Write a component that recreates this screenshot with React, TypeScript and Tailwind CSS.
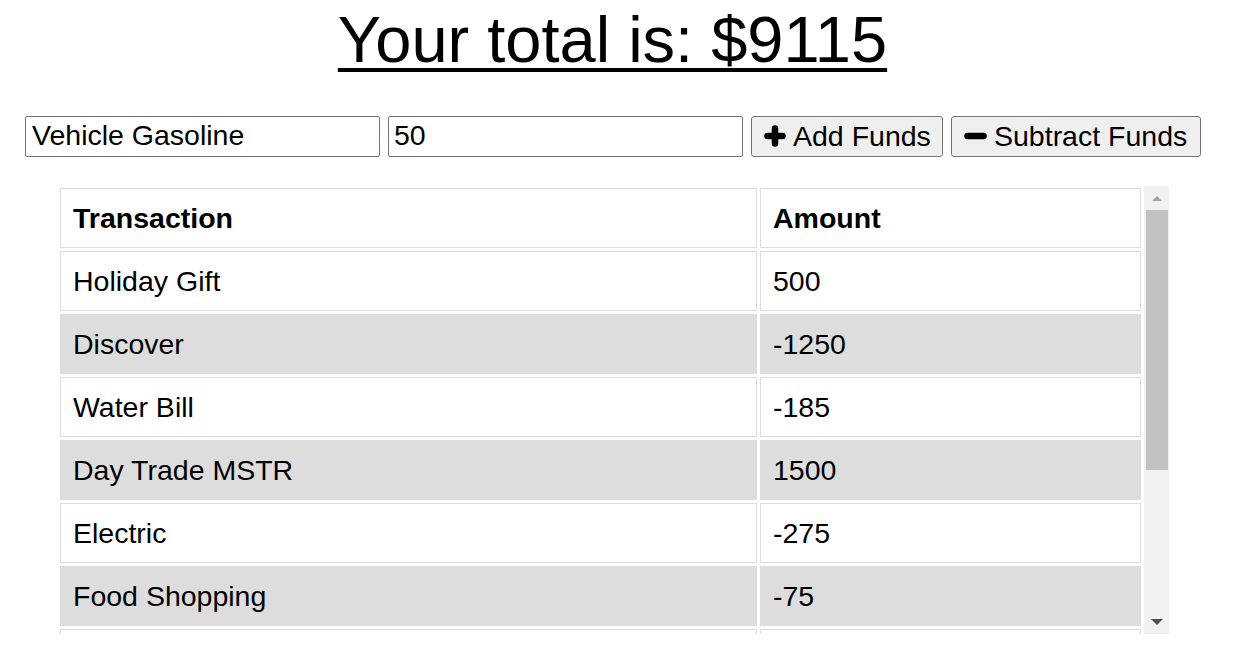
import React from "react";

const rows = [
  { name: "Holiday Gift", value: "500" },
  { name: "Discover", value: "-1250" },
  { name: "Water Bill", value: "-185" },
  { name: "Day Trade MSTR", value: "1500" },
  { name: "Electric", value: "-275" },
  { name: "Food Shopping", value: "-75" },
  { name: "Paycheck", value: "2400" },
];

const PlusIcon = () => (
  <svg width="22" height="22" viewBox="0 0 22 22" className="shrink-0">
    <path d="M11 3.5v15M3.5 11h15" stroke="#000" strokeWidth="6.5" strokeLinecap="round" />
  </svg>
);

const MinusIcon = () => (
  <svg width="23" height="22" viewBox="0 0 23 22" className="shrink-0">
    <path d="M3.5 11h16" stroke="#000" strokeWidth="6.5" strokeLinecap="round" />
  </svg>
);

const Scrollbar = () => (
  <div className="w-[25px] h-full bg-[#f1f1f1] flex flex-col items-center">
    <div className="h-[24px] w-full flex items-center justify-center">
      <div className="w-0 h-0 border-l-[5px] border-r-[5px] border-b-[5px] border-l-transparent border-r-transparent border-b-[#a3a3a3]" />
    </div>
    <div className="w-[22px] h-[260px] bg-[#c1c1c1]" />
    <div className="flex-1" />
    <div className="h-[24px] w-full flex items-center justify-center">
      <div className="w-0 h-0 border-l-[6px] border-r-[6px] border-t-[6px] border-l-transparent border-r-transparent border-t-[#505050]" />
    </div>
  </div>
);

export default function App() {
  return (
    <div className="w-[1225px] bg-white text-black font-['Liberation_Sans',Arial,sans-serif]">
      <h1 className="text-center text-[65px] leading-[74px] pt-[3px] underline decoration-[4px] underline-offset-[6px]">
        Your total is: $9115
      </h1>

      <div className="mt-[39px] flex gap-2 pl-[25px]">
        <input
          defaultValue="Vehicle Gasoline"
          className="w-[355px] h-[41px] border border-[#767676] rounded-[2px] px-[6px] pb-[2px] text-[28.5px] leading-[32px] outline-none"
        />
        <input
          defaultValue="50"
          className="w-[355px] h-[41px] border border-[#767676] rounded-[2px] px-[5px] pb-[2px] text-[28.5px] leading-[32px] outline-none"
        />
        <button className="w-[192px] h-[41px] border border-[#767676] rounded-[3px] bg-[#efefef] flex items-center gap-[7px] pl-[12px] pb-[1px] text-[28.5px] leading-[32px]">
          <PlusIcon />
          <span>Add Funds</span>
        </button>
        <button className="w-[250px] h-[41px] border border-[#767676] rounded-[3px] bg-[#efefef] flex items-center gap-[7px] pl-[12px] pb-[1px] text-[28.5px] leading-[32px]">
          <MinusIcon />
          <span>Subtract Funds</span>
        </button>
      </div>

      <div className="mt-[29px] ml-[57px] w-[1112px] h-[448px] flex">
        <div className="flex-1 overflow-hidden">
          <table className="w-[1087px] table-fixed border-separate border-spacing-[3px] -mt-[1px] text-[28.5px] leading-[32px]">
            <thead>
              <tr>
                <th className="w-[697px] text-left font-bold border border-[#dddddd] pl-[12px] pr-[13px] py-[13px]">Transaction</th>
                <th className="text-left font-bold border border-[#dddddd] pl-[12px] pr-[13px] py-[13px]">Amount</th>
              </tr>
            </thead>
            <tbody>
              {rows.map((row, i) => (
                <tr key={row.name} className={i % 2 === 1 ? "bg-[#dddddd]" : "bg-white"}>
                  <td className="border border-[#dddddd] pl-[12px] pr-[13px] py-[13px]">{row.name}</td>
                  <td className="border border-[#dddddd] pl-[12px] pr-[13px] py-[13px]">{row.value}</td>
                </tr>
              ))}
            </tbody>
          </table>
        </div>
        <Scrollbar />
      </div>
    </div>
  );
}
